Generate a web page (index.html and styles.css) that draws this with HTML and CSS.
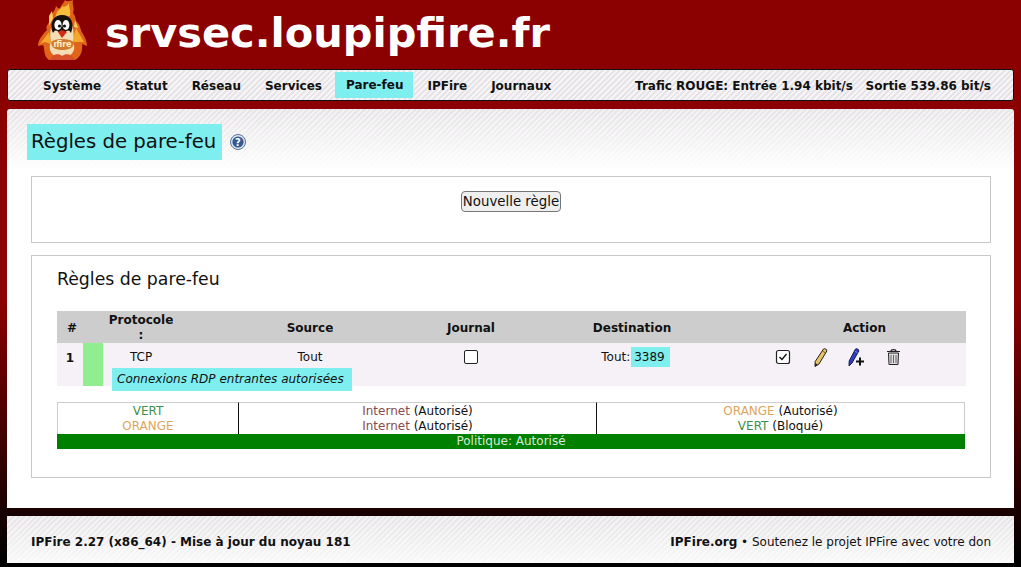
FILE: index.html
```html
<!DOCTYPE html>
<html lang="fr">
<head>
    <meta charset="UTF-8">
    <meta name="viewport" content="width=device-width, initial-scale=1.0">
    <title>srvsec.loupipfire.fr - Règles de pare-feu</title>
    <link rel="stylesheet" href="styles.css">
</head>
<body>
    <header class="header">
        <svg class="logo" width="52" height="62" viewBox="0 0 52 62">
            <path d="M12 60C6 56 8 48 6 45L1 46C1 40 6 34 10 30C8 26 12 24 13 20C13 14 18 12 19 6C21 8 22 9 23 8C24 5 27 3 28 0C30 2 33 1 36 0C35 6 38 8 36 13C39 16 38 20 40 22C44 26 43 30 46 34C48 38 50 41 50 46L45 44C46 50 44 57 38 60Z" fill="#e0641a"/>
            <path d="M20 12C22 9 24 10 25 6C27 8 30 6 32 3C32 8 34 11 33 16L18 18Z" fill="#f8bc3c"/>
            <path d="M3 44L12 32L14 44L8 42ZM47 42L39 28L35 42Z" fill="#f4a82c"/>
            <path d="M12 16L15 11L16 18L12 26ZM38 20L41 28L37 27Z" fill="#fcd060"/>
            <path d="M14 42C12 32 14 17 25 17C36 17 38 32 36 42C40 50 34 58 25 58C16 58 10 50 14 42Z" fill="#f4dcb4"/>
            <path d="M16 33C12 24 16 15 25 15C34 15 38 23 34 33C31 27 28 33 25 35C22 33 19 27 16 33Z" fill="#15110f"/>
            <ellipse cx="21" cy="25" rx="3.6" ry="5" fill="#fff"/>
            <ellipse cx="29" cy="25" rx="3.4" ry="5" fill="#fff"/>
            <circle cx="22.5" cy="26" r="1.6" fill="#111"/>
            <circle cx="27.5" cy="26" r="1.6" fill="#111"/>
            <path d="M21 32L25 30L30 32L25 38Z" fill="#d02a18"/>
            <path d="M14 42C18 38 32 38 37 42C37 48 32 50 25 50C19 50 14 48 14 42Z" fill="#d07a2c"/>
            <text x="25.5" y="47" class="logo-text">ıfire</text>
            <path d="M13 60C15 54 22 53 25 56C29 53 35 54 38 60Z" fill="#d8502a"/>
        </svg>
        <div class="site-name">srvsec.loupipfire.fr</div>
    </header>

    <nav class="nav panel-stripes">
        <ul class="menu">
            <li>Système</li>
            <li>Statut</li>
            <li>Réseau</li>
            <li>Services</li>
            <li class="active">Pare-feu</li>
            <li>IPFire</li>
            <li>Journaux</li>
        </ul>
        <div class="traffic">Trafic ROUGE: Entrée 1.94 kbit/s <span class="traffic-out">Sortie 539.86 bit/s</span></div>
    </nav>

    <main class="main panel-stripes">
        <div class="page-title">
            <h1>Règles de pare-feu</h1>
            <svg class="help" width="16" height="16" viewBox="0 0 16 16">
                <circle cx="8" cy="8" r="7.5" fill="#dfe6f0" stroke="#5a7396"/>
                <circle cx="8" cy="8" r="5.6" fill="#34598f"/>
                <text x="8" y="11.5" class="help-text">?</text>
            </svg>
        </div>

        <section class="box box-new">
            <button type="button" class="btn">Nouvelle règle</button>
        </section>

        <section class="box box-rules">
            <h2>Règles de pare-feu</h2>
            <table class="rules">
                <colgroup>
                    <col class="c-num"><col class="c-color"><col class="c-proto"><col class="c-src"><col class="c-log"><col class="c-dst">
                    <col class="c-act"><col class="c-act"><col class="c-act"><col class="c-act"><col>
                </colgroup>
                <thead>
                    <tr>
                        <th class="th-num">#</th>
                        <th></th>
                        <th>Protocole<br>:</th>
                        <th>Source</th>
                        <th>Journal</th>
                        <th>Destination</th>
                        <th colspan="5">Action</th>
                    </tr>
                </thead>
                <tbody>
                    <tr>
                        <td class="num" rowspan="2">1</td>
                        <td class="allow" rowspan="2"></td>
                        <td>TCP</td>
                        <td>Tout</td>
                        <td><span class="check"></span></td>
                        <td class="dst">Tout: <span class="mark port">3389</span></td>
                        <td class="act act-first">
                            <svg class="icon" width="16" height="16" viewBox="0 0 16 16">
                                <rect x="1.5" y="1.5" width="13" height="13" rx="2" fill="#fff" stroke="#222" stroke-width="1.2"/>
                                <path d="M4.5 8L7 10.5L11.5 5" fill="none" stroke="#111" stroke-width="1.4"/>
                            </svg>
                        </td>
                        <td class="act">
                            <svg class="icon" width="14" height="19" viewBox="0 0 14 19">
                                <path d="M9.5 1C11 0 13 1.5 12.8 3L5 16L1 18.5L1.2 13.5Z" fill="#e8c468" stroke="#2a2010" stroke-width="1"/>
                                <path d="M8.5 3L11.5 5" stroke="#4a3a18" stroke-width=".7"/>
                                <path d="M1.2 15L1 18.5L3.8 16.8Z" fill="#222"/>
                            </svg>
                        </td>
                        <td class="act">
                            <svg class="icon" width="18" height="19" viewBox="0 0 18 19">
                                <path d="M7.5 1C9 0 11 1.5 10.8 3L4 15L1 18L1.2 13Z" fill="#2f3fc0" stroke="#141850" stroke-width="1"/>
                                <path d="M7 3L9.5 5" stroke="#8a94e8" stroke-width=".8"/>
                                <path d="M8 13.5H16M12 9.5V17.5" stroke="#111" stroke-width="2"/>
                            </svg>
                        </td>
                        <td class="act">
                            <svg class="icon" width="15" height="18" viewBox="0 0 15 18">
                                <path d="M2.5 5H12.5L12 16.5H3Z" fill="#ddd" stroke="#222"/>
                                <path d="M1 3.5H14M5 3.2C5 1 10 1 10 3.2" fill="none" stroke="#222" stroke-width="1.2"/>
                                <path d="M5 7V15M7.5 7V15M10 7V15" stroke="#666"/>
                            </svg>
                        </td>
                        <td></td>
                    </tr>
                    <tr>
                        <td colspan="9" class="remark"><span class="mark note">Connexions RDP entrantes autorisées</span></td>
                    </tr>
                </tbody>
            </table>

            <table class="policy">
                <colgroup><col class="p-a"><col class="p-b"><col></colgroup>
                <tr>
                    <td><span class="green">VERT</span><br><span class="orange">ORANGE</span></td>
                    <td><span class="red">Internet</span> (Autorisé)<br><span class="red">Internet</span> (Autorisé)</td>
                    <td><span class="orange">ORANGE</span> (Autorisé)<br><span class="green">VERT</span> (Bloqué)</td>
                </tr>
                <tr>
                    <td colspan="3" class="policy-state">Politique: Autorisé</td>
                </tr>
            </table>
        </section>
    </main>

    <footer class="footer panel-stripes">
        <strong>IPFire 2.27 (x86_64) - Mise à jour du noyau 181</strong>
        <div><strong>IPFire.org</strong> • Soutenez le projet IPFire avec votre don</div>
    </footer>
</body>
</html>
```

FILE: styles.css
```css
html, body {
    height: 100%;
}
body {
    margin: 0;
    height: 567px;
    overflow: hidden;
    box-sizing: border-box;
    padding: 0 7px;
    font-family: "DejaVu Sans", sans-serif;
    font-size: 12px;
    color: #111;
    background: linear-gradient(to bottom, #8b0000 0, #8b0000 300px, #000 560px);
}

/* fond rayé commun aux panneaux */
.panel-stripes {
    background-color: #fff;
    background-image:
        linear-gradient(to bottom, rgba(255, 255, 255, 0) 0, #fff 62px),
        repeating-linear-gradient(135deg, #e6e4e6 0, #e6e4e6 2px, #f3f1f3 2px, #f3f1f3 4px);
}

.header {
    display: flex;
    align-items: flex-start;
    height: 69px;
    box-sizing: border-box;
    padding-left: 30px;
}
.logo {
    flex: none;
}
.logo-text {
    font-size: 8px;
    font-weight: bold;
    fill: #fff2c8;
    text-anchor: middle;
}
.site-name {
    margin-left: 16px;
    font-size: 41.5px;
    line-height: 66px;
    font-weight: bold;
    color: #fff;
    white-space: nowrap;
}

.nav {
    display: flex;
    justify-content: space-between;
    align-items: center;
    height: 32px;
    box-sizing: border-box;
    border: 1px solid #111;
    border-radius: 3px;
    padding: 0 22px 0 23px;
    background-image:
        repeating-linear-gradient(135deg, #e6e4e6 0, #e6e4e6 2px, #f6f4f6 2px, #f6f4f6 4px);
    font-weight: bold;
}
.menu {
    display: flex;
    list-style: none;
    margin: 0;
    padding: 0;
    align-self: stretch;
    align-items: center;
}
.menu li {
    padding: 7px 12px 4px;
    line-height: 15px;
}
.menu .active {
    background: #7feeee;
    padding: 6px 10px 5px 11px;
    margin: 0 2px 0 1px;
}
.traffic {
    white-space: pre-wrap;
    padding-top: 2px;
}
.traffic-out {
    margin-left: 8.5px;
}

.main {
    margin-top: 8px;
    height: 399px;
    box-sizing: border-box;
    border-radius: 3px 3px 0 0;
    padding: 15px 23px 0 24px;
}
.page-title {
    display: flex;
    align-items: center;
    margin-left: -4px;
    gap: 8px;
}
.page-title h1 {
    margin: 0;
    padding: 0 6px 0 4px;
    background: #7feeee;
    font-size: 19.7px;
    font-weight: normal;
    line-height: 36px;
}
.help-text {
    font-size: 10px;
    font-weight: bold;
    fill: #fff;
    text-anchor: middle;
}

.box {
    box-sizing: border-box;
    border: 1px solid #c8c8c8;
    background: #fff;
}
.box-new {
    height: 67px;
    margin-top: 16px;
    padding-top: 14px;
    text-align: center;
}
.btn {
    height: 21px;
    padding: 0 1px;
    border: 1px solid #777;
    border-radius: 4px;
    background: #efefef;
    font-family: inherit;
    font-size: 13.33px;
    color: #111;
}
.box-rules {
    height: 223px;
    margin-top: 12px;
    padding: 12px 24px 0 25px;
}
.box-rules h2 {
    margin: 0 0 21px;
    font-size: 17.3px;
    font-weight: normal;
    line-height: 22px;
}

.rules {
    width: 909px;
    table-layout: fixed;
    border-collapse: collapse;
    text-align: center;
}
.c-num { width: 26px; }
.c-color { width: 20px; }
.c-proto { width: 76px; }
.c-src { width: 262px; }
.c-log { width: 60px; }
.c-dst { width: 262px; }
.c-act { width: 36.7px; }
.rules th {
    height: 32px;
    padding: 2px 0 0;
    box-sizing: border-box;
    background: #cdcdcd;
    line-height: 15px;
    font-size: 12px;
}
.rules th.th-num {
    padding-left: 4px;
}
.rules td {
    padding: 2px 0 0;
    background: #f6f1f6;
}
.rules tbody tr:first-child td {
    height: 26px;
    box-sizing: border-box;
}
.rules td.num {
    font-weight: bold;
    vertical-align: top;
    padding-top: 8px;
}
.rules td.allow {
    background: #90ee90;
}
.rules td.dst {
    padding-left: 7px;
}
.rules td.act {
    padding-left: 5px;
}
.rules td.act-first {
    padding-left: 3px;
}
.rules td.remark {
    height: 14px;
    padding: 3px 0 0 9px;
    text-align: left;
    vertical-align: top;
    line-height: 14px;
}
.mark {
    background: #7feeee;
    padding: 3px 5px 3px 3px;
}
.port {
    margin-left: -3px;
}
.note {
    padding: 4px 8px 5px 5px;
    font-style: italic;
    font-size: 12px;
}
.check {
    display: inline-block;
    width: 12px;
    height: 12px;
    border: 1px solid #222;
    border-radius: 2px;
    background: #fff;
    vertical-align: middle;
}
.icon {
    display: block;
    margin: 0 auto;
}

.policy {
    width: 908px;
    margin-top: 16px;
    table-layout: fixed;
    border-collapse: separate;
    border-spacing: 0;
    text-align: center;
}
.p-a { width: 181px; }
.p-b { width: 358px; }
.policy td {
    padding: 1px 0 0;
    line-height: 15px;
    border-top: 1px solid #ccc;
    border-left: 1px solid #111;
}
.policy td:first-child {
    border-left: 1px solid #ccc;
}
.policy td:last-child {
    border-right: 1px solid #ccc;
}
.policy td.policy-state {
    border: 0;
    padding: 0;
    background: #008000;
    color: #d8e8d8;
}
.green { color: #3d8f4a; }
.orange { color: #e0a55c; }
.red { color: #8b4a4a; }

.footer {
    display: flex;
    justify-content: space-between;
    align-items: center;
    height: 47px;
    margin-top: 8px;
    padding: 4px 23px 0 24px;
    box-sizing: border-box;
}
```
